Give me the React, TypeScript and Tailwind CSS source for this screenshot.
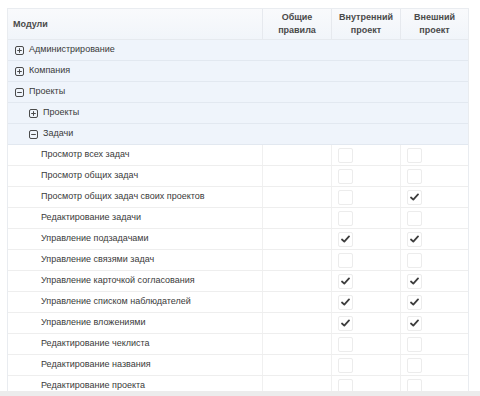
import React from 'react';

type Row = {
  label: string;
  level: 0 | 1 | 2;
  toggle?: 'plus' | 'minus';
  inner?: boolean;
  outer?: boolean;
};

const rows: Row[] = [
  { label: 'Администрирование', level: 0, toggle: 'plus' },
  { label: 'Компания', level: 0, toggle: 'plus' },
  { label: 'Проекты', level: 0, toggle: 'minus' },
  { label: 'Проекты', level: 1, toggle: 'plus' },
  { label: 'Задачи', level: 1, toggle: 'minus' },
  { label: 'Просмотр всех задач', level: 2 },
  { label: 'Просмотр общих задач', level: 2 },
  { label: 'Просмотр общих задач своих проектов', level: 2, outer: true },
  { label: 'Редактирование задачи', level: 2 },
  { label: 'Управление подзадачами', level: 2, inner: true, outer: true },
  { label: 'Управление связями задач', level: 2 },
  { label: 'Управление карточкой согласования', level: 2, inner: true, outer: true },
  { label: 'Управление списком наблюдателей', level: 2, inner: true, outer: true },
  { label: 'Управление вложениями', level: 2, inner: true, outer: true },
  { label: 'Редактирование чеклиста', level: 2 },
  { label: 'Редактирование названия', level: 2 },
  { label: 'Редактирование проекта', level: 2 },
];

function ToggleIcon({ type }: { type: 'plus' | 'minus' }) {
  return (
    <svg width="9" height="9" viewBox="0 0 9 9" className="shrink-0">
      <rect x="0.5" y="0.5" width="8" height="8" rx="1.5" fill="none" stroke="#4a4a4a" strokeWidth="1" />
      <line x1="2.2" y1="4.5" x2="6.8" y2="4.5" stroke="#4a4a4a" strokeWidth="1" />
      {type === 'plus' && <line x1="4.5" y1="2.2" x2="4.5" y2="6.8" stroke="#4a4a4a" strokeWidth="1" />}
    </svg>
  );
}

function Check({ checked }: { checked?: boolean }) {
  return (
    <div className="w-[15px] h-[15px] border border-[#ececec] rounded-[2px] bg-white flex items-center justify-center">
      {checked && (
        <svg width="9" height="8" viewBox="0 0 9 8">
          <path d="M1 4.5 L3.3 6.6 L8 1.4" fill="none" stroke="#3d3d3d" strokeWidth="1.8" strokeLinecap="round" strokeLinejoin="round" />
        </svg>
      )}
    </div>
  );
}

export default function App() {
  return (
    <div className="relative h-[396px] w-[480px] overflow-hidden bg-white font-['Liberation_Sans',Arial,sans-serif] text-[#3a3a3a]">
      <div className="pt-[8px] pl-[7px]">
        <div className="w-[462px] border border-[#e9ecf0] border-b-0">
          {/* Header */}
          <div className="flex h-[31px] bg-gradient-to-b from-[#f9fafc] to-[#f1f5fa] border-b border-[#e6eaef] text-[9px] font-bold text-[#4a4a4a] leading-[13px]">
            <div className="w-[254px] flex items-center pl-[5px]">Модули</div>
            <div className="w-[69px] border-l border-[#e6e9ee] flex items-center justify-center text-center">
              Общие<br />правила
            </div>
            <div className="w-[69px] border-l border-[#e6e9ee] flex items-center justify-center text-center">
              Внутренний<br />проект
            </div>
            <div className="flex-1 border-l border-[#e6e9ee] flex items-center justify-center text-center">
              Внешний<br />проект
            </div>
          </div>

          {rows.map((r, i) =>
            r.level < 2 ? (
              <div
                key={i}
                className="flex items-center h-[21px] bg-[#eff4fb] border-b border-[#e2e8f0] text-[9px]"
              >
                <div className={`flex items-center gap-[5px] ${r.level === 0 ? 'pl-[7px]' : 'pl-[21px]'}`}>
                  <ToggleIcon type={r.toggle!} />
                  <span>{r.label}</span>
                </div>
              </div>
            ) : (
              <div key={i} className="flex h-[21px] border-b border-[#eeeeee] text-[9px] bg-white">
                <div className="w-[254px] flex items-center pl-[33px]">{r.label}</div>
                <div className="w-[69px] border-l border-[#f0f0f0]" />
                <div className="w-[69px] border-l border-[#f0f0f0] flex items-center pl-[6px]">
                  <Check checked={r.inner} />
                </div>
                <div className="flex-1 border-l border-[#f0f0f0] flex items-center pl-[6px]">
                  <Check checked={r.outer} />
                </div>
              </div>
            )
          )}
        </div>
      </div>
      <div className="absolute left-0 right-0 bottom-0 h-[5px] bg-[#ececec]" />
    </div>
  );
}
